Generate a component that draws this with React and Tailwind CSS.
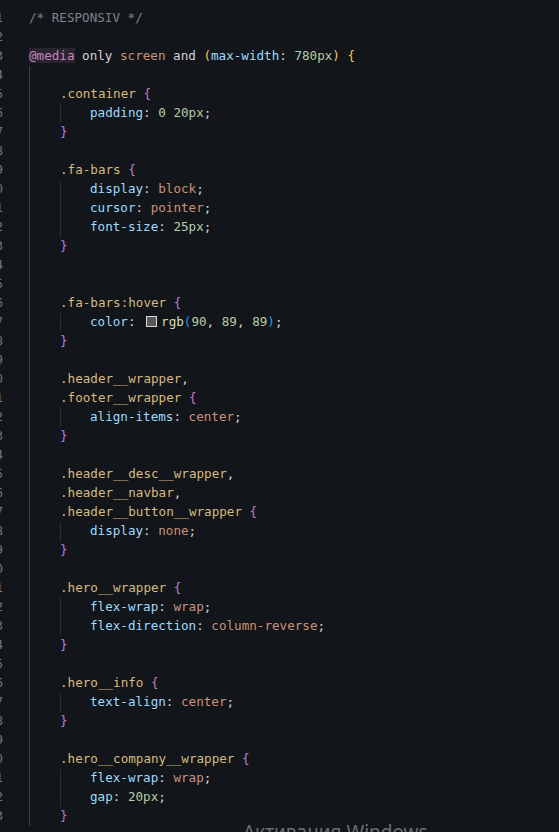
const colors = {
  c: "text-[#7d828a] not-italic",
  at: "text-[#c586c0] bg-[#2a2430]",
  w: "text-[#d4d4d4]",
  o: "text-[#ce9178]",
  y: "text-[#f0c94f]",
  p: "text-[#9cdcfe]",
  n: "text-[#b5cea8]",
  s: "text-[#d7ba7d]",
  b: "text-[#c27bd0]",
  f: "text-[#dcdcaa]",
  bl: "text-[#179fff]",
};

const sel = (name, end) => [["s", name], end === "{" ? ["w", " "] : null, end === "{" ? ["b", "{"] : ["w", end]].filter(Boolean);
const prop = (name, value, kind = "o") => [["p", name], ["w", ": "], [kind, value], ["w", ";"]];
const close = [["b", "}"]];

// [indent level, tokens]
const lines = [
  [0, [["c", "/* RESPONSIV */"]]],
  [0, []],
  [0, [["at", "@media"], ["w", " only "], ["o", "screen"], ["w", " and "], ["y", "("], ["p", "max-width"], ["w", ": "], ["n", "780px"], ["y", ")"], ["w", " "], ["y", "{"]]],
  [1, []],
  [1, sel(".container", "{")],
  [2, [["p", "padding"], ["w", ": "], ["n", "0 20px"], ["w", ";"]]],
  [1, close],
  [1, []],
  [1, sel(".fa-bars", "{")],
  [2, prop("display", "block")],
  [2, prop("cursor", "pointer")],
  [2, prop("font-size", "25px", "n")],
  [1, close],
  [1, []],
  [1, []],
  [1, sel(".fa-bars:hover", "{")],
  [2, [["p", "color"], ["w", ": "], ["sw", ""], ["f", "rgb"], ["bl", "("], ["n", "90"], ["w", ", "], ["n", "89"], ["w", ", "], ["n", "89"], ["bl", ")"], ["w", ";"]]],
  [1, close],
  [1, []],
  [1, sel(".header__wrapper", ",")],
  [1, sel(".footer__wrapper", "{")],
  [2, prop("align-items", "center")],
  [1, close],
  [1, []],
  [1, sel(".header__desc__wrapper", ",")],
  [1, sel(".header__navbar", ",")],
  [1, sel(".header__button__wrapper", "{")],
  [2, prop("display", "none")],
  [1, close],
  [1, []],
  [1, sel(".hero__wrapper", "{")],
  [2, prop("flex-wrap", "wrap")],
  [2, prop("flex-direction", "column-reverse")],
  [1, close],
  [1, []],
  [1, sel(".hero__info", "{")],
  [2, prop("text-align", "center")],
  [1, close],
  [1, []],
  [1, sel(".hero__company__wrapper", "{")],
  [2, prop("flex-wrap", "wrap")],
  [2, prop("gap", "20px", "n")],
  [1, close],
];

function Token({ kind, text }) {
  if (kind === "sw") {
    return <span className="inline-block w-[11px] h-[11px] ml-[3px] mr-[4px] border border-[#d8d8d8] bg-[rgb(90,89,89)] align-[-1px]" />;
  }
  return <span className={colors[kind]}>{text}</span>;
}

function Line({ level, tokens, number }) {
  return (
    <div className="flex h-[19px] items-center">
      {/* gutter, cut off by the screenshot edge */}
      <div className="flex justify-end overflow-hidden w-[3px] shrink-0 text-[#6e7681]">
        <span>{number}</span>
      </div>
      <div className="w-[26px] shrink-0" />
      {level >= 1 && <div className="w-[31px] h-full shrink-0 border-l border-[#3d4045]" />}
      {level >= 2 && <div className="w-[30px] h-full shrink-0 border-l border-[#2a2d32]" />}
      <div className="whitespace-pre">
        {tokens.map(([kind, text], i) => (
          <Token key={i} kind={kind} text={text} />
        ))}
      </div>
    </div>
  );
}

export default function App() {
  return (
    <div className="relative h-[832px] w-full overflow-hidden bg-[#12151a] pt-[9px] text-[12.6px] font-['DejaVu_Sans_Mono',monospace]">
      {lines.map(([level, tokens], i) => (
        <Line key={i} level={level} tokens={tokens} number={i + 301} />
      ))}
      {/* windows activation watermark */}
      <div className="absolute left-[243px] top-[823px] text-[19px] leading-none text-[#85888c]/80 font-['Noto_Sans',sans-serif] whitespace-nowrap">
        Активация Windows
      </div>
    </div>
  );
}
